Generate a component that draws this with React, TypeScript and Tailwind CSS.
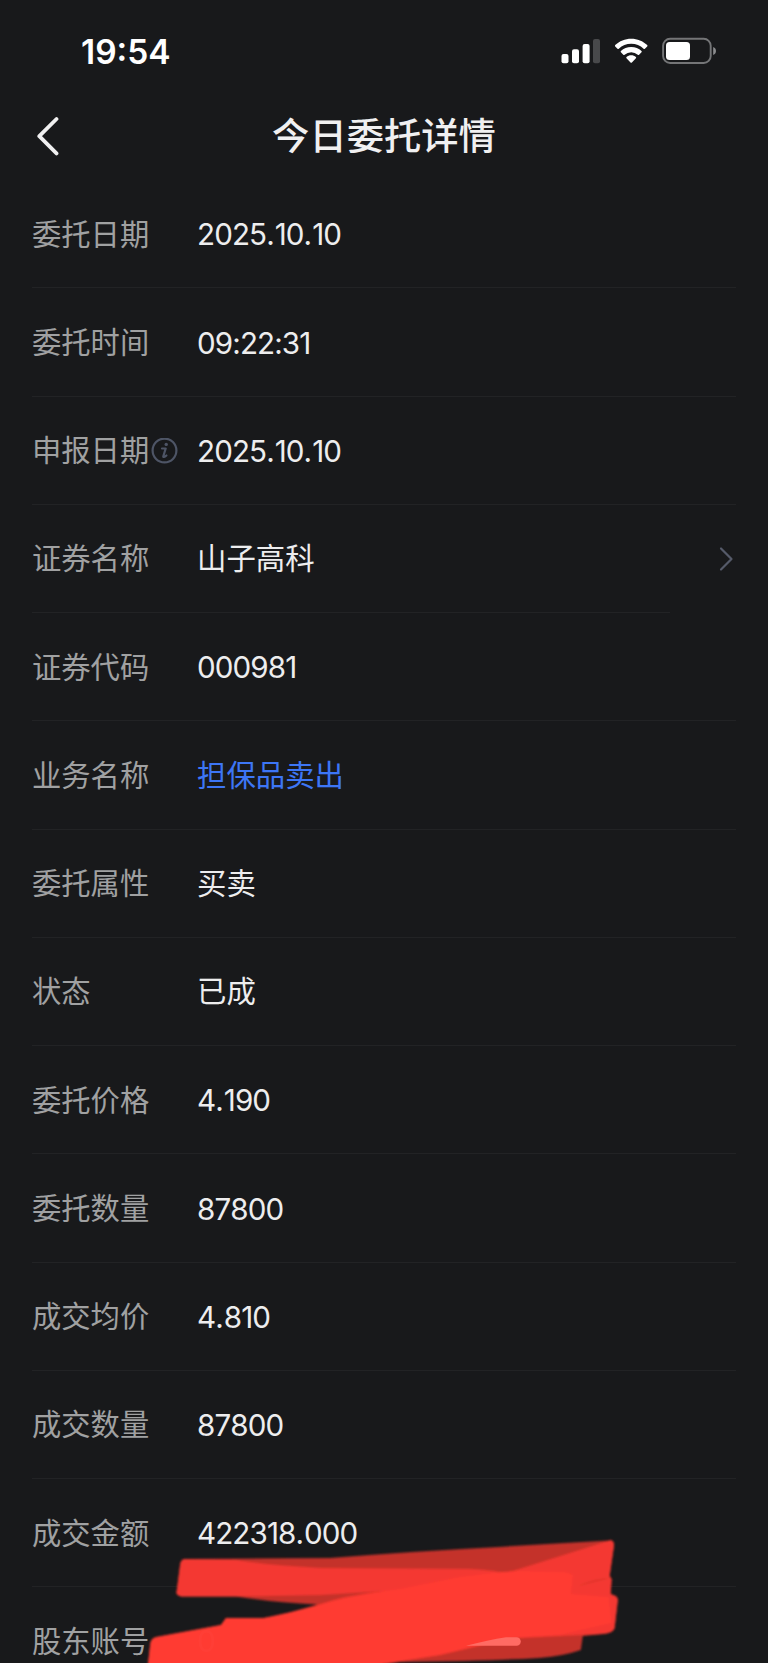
import React from "react";

type RowData = {
  label: string;
  value: string;
  info?: boolean;
  link?: boolean;
  highlight?: boolean;
};

const rows: RowData[] = [
  { label: "委托日期", value: "2025.10.10" },
  { label: "委托时间", value: "09:22:31" },
  { label: "申报日期", value: "2025.10.10", info: true },
  { label: "证券名称", value: "山子高科", link: true },
  { label: "证券代码", value: "000981" },
  { label: "业务名称", value: "担保品卖出", highlight: true },
  { label: "委托属性", value: "买卖" },
  { label: "状态", value: "已成" },
  { label: "委托价格", value: "4.190" },
  { label: "委托数量", value: "87800" },
  { label: "成交均价", value: "4.810" },
  { label: "成交数量", value: "87800" },
  { label: "成交金额", value: "422318.000" },
  { label: "股东账号", value: "" },
];

function StatusBar() {
  return (
    <div className="flex h-[88px] shrink-0 items-start justify-between pl-[81px] pr-[51px] pt-[31px] text-white">
      <span className="pt-px text-[33.5px] leading-[41px] font-semibold">19:54</span>
      <svg className="mt-[6px] h-7 w-[156px]" viewBox="561 37 156 28" fill="#fff">
        <rect x="561.5" y="54" width="7" height="9.3" rx="2" />
        <rect x="572" y="49.3" width="7" height="14" rx="2" />
        <rect x="582.6" y="44" width="7" height="19.3" rx="2" />
        <rect x="593" y="39" width="7" height="24.3" rx="2" fill="#48494b" />
        <path d="M631.2 38.8c6.2 0 11.8 2.4 16 6.3.4.4.4.9 0 1.3l-2.3 2.3c-.4.4-.9.4-1.3 0-3.3-3.1-7.6-4.9-12.4-4.9s-9.1 1.8-12.4 4.9c-.4.4-.9.4-1.3 0l-2.3-2.3c-.4-.4-.4-.9 0-1.3 4.2-3.900 9.800-6.300 16-6.300z" />
        <path d="M631.200 47c4 0 7.600 1.500 10.300 4 .4.4.4.9 0 1.300l-2.400 2.400c-.4.4-.9.4-1.300 0a9.800 9.800 0 0 0-13.200 0c-.4.4-.9.4-1.300 0l-2.400-2.400c-.4-.4-.4-.9 0-1.300 2.700-2.500 6.300-4 10.300-4z" />
        <path d="M631.200 55.300c1.800 0 3.400.6 4.700 1.700.4.4.4.9 0 1.300l-4 4.200c-.4.4-1 .4-1.400 0l-4-4.200c-.4-.4-.4-.9 0-1.300 1.300-1.100 2.900-1.700 4.700-1.700z" />
        <rect x="663.100" y="38.800" width="47.600" height="24.200" rx="7" fill="none" stroke="#747577" strokeWidth="1.900" />
        <rect x="666" y="42" width="24" height="18" rx="3.500" />
        <path d="M713.200 47c3.700 1.300 3.700 6.700 0 8z" fill="#8b8c8e" />
      </svg>
    </div>
  );
}

function Header() {
  return (
    <header className="grid h-[92px] shrink-0 grid-cols-[96px_1fr_96px] items-center pt-[3px]">
      <svg className="ml-9 h-10 w-6" viewBox="0 0 24 40" fill="none" stroke="#f0f0f1" strokeWidth="3.800" strokeLinecap="round" strokeLinejoin="round">
        <path d="M20.500 3 3.300 20.200l17.200 17.200" />
      </svg>
      <h1 className="pt-[2px] text-center text-[37.300px] leading-[56px] font-medium text-[#f0f0f1]">今日委托详情</h1>
    </header>
  );
}

function InfoIcon() {
  return (
    <svg className="ml-[1.500px] size-[27px] shrink-0" viewBox="0 0 27 27" fill="none">
      <circle cx="13.500" cy="12.500" r="11.900" stroke="#4e5566" strokeWidth="2.200" />
      <path d="M11 10.500h3.700l-2.400 7.800c-.3 1.100 1.200 1 3.100-.8" stroke="#4e5566" strokeWidth="2.200" strokeLinecap="round" strokeLinejoin="round" />
      <circle cx="15.200" cy="6.400" r="1.700" fill="#4e5566" />
    </svg>
  );
}

function Value({ text, highlight }: { text: string; highlight?: boolean }) {
  if (/^[\d.:]+$/.test(text)) {
    return (
      <dd className="flex-1 text-[29.600px] tracking-[-0.900px] text-[#ededee] [font-kerning:none] [font-feature-settings:'calt'_0]">
        {text.split(/([.:])/).map((part, i) => (
          <span key={i} className={part === "." ? "tracking-[0px]" : ""}>{part}</span>
        ))}
      </dd>
    );
  }
  return <dd className={highlight ? "flex-1 text-[29.400px] text-[#3d76f6]" : "flex-1 text-[29.400px] text-[#ededee]"}>{text}</dd>;
}

function Row({ label, value, info, link, highlight }: RowData) {
  return (
    <div className="flex h-[108.250px] shrink-0 flex-col">
      <dl className="flex flex-1 items-center pt-[2px]">
        <dt className="flex w-[165px] items-center text-[29.300px] text-[#a0a1a2]">
          <span className="whitespace-nowrap">{label}</span>
          {info && <InfoIcon />}
        </dt>
        <Value text={value} highlight={highlight} />
        {link && (
          <svg className="mr-[2px] h-[26px] w-4" viewBox="0 0 16 26" fill="none" stroke="#555a69" strokeWidth="2.200" strokeLinecap="round" strokeLinejoin="round">
            <path d="M3 2.500 13.500 13 3 23.500" />
          </svg>
        )}
      </dl>
      <div className={link ? "mr-[66px] h-px bg-[#222325]" : "h-px bg-[#222325]"} />
    </div>
  );
}

function MarkerStrokes() {
  return (
    <svg className="absolute inset-x-0 bottom-0 h-[143px] w-full" viewBox="0 1520 768 143">
      <defs>
        <filter id="soft" x="-5%" y="-10%" width="110%" height="120%">
          <feGaussianBlur stdDeviation="1.1" />
        </filter>
      </defs>
      <g filter="url(#soft)" transform="translate(2.300 0.900) scale(0.994 1)">
        <path fill="#c4322c" d="M184 1558 330 1557Q420 1550 500 1546L611 1539.500Q615 1539 615.500 1544L611 1575 613 1578 612 1593 617 1595Q620 1597 619 1601L616 1627Q615 1632 604 1633L584 1635 582 1649Q565 1655 540 1657 490 1660 400 1661L360 1668H146L149 1642Q150 1637 155 1636L220 1624 225 1617H263Q290 1612 317 1603.500 275 1602 235 1595.500H180Q174 1594 175.500 1590L179 1563Q180 1558 184 1558Z" />
        <path fill="#f43830" d="M184 1558 235 1559Q270 1565 320 1567L470 1568Q490 1569 500 1571 510 1572 520 1568L611 1539.500Q615 1539 615.500 1544L611 1575 613 1578 612 1593 617 1595Q620 1597 619 1601L616 1627Q615 1632 604 1633L520 1637 482 1644 440 1654 395 1661 300 1668H200L317 1604Q345 1594 385 1590L320 1594 235 1595.500H180Q174 1594 175.500 1590L179 1563Q180 1558 184 1558Z" />
        <path fill="#ff3b30" d="M146 1668 149 1642Q150 1637 155 1636L220 1624 225 1617H263Q290 1612 330 1601 370 1591 400 1588L460 1576Q500 1571 520 1570L566 1571 574 1574 572 1593 610 1596 613 1622 560 1634 515 1637 482 1644 440 1654 395 1661 350 1668Z" />
        <path fill="#d8352e" opacity="0.7" d="M580 1585Q595 1577 612 1577 600 1580 580 1585Z" />
      </g>
      <path fill="#ff6b63" d="M466 1645.800Q488 1640 506 1637.200H516.500A4.300 4.300 0 0 1 516.500 1645.800Z" />
      <text x="197" y="1652" fontSize="30" fill="#fff" opacity="0.015">0</text>
    </svg>
  );
}

export default function App() {
  return (
    <main lang="zh-CN" className="relative flex h-[1663px] w-full flex-col overflow-hidden bg-[#18191b] font-['Inter','Noto_Sans_CJK_SC',sans-serif]">
      <StatusBar />
      <Header />
      <section className="flex flex-col px-8">
        {rows.map((row) => (
          <Row key={row.label} {...row} />
        ))}
      </section>
      <MarkerStrokes />
    </main>
  );
}
